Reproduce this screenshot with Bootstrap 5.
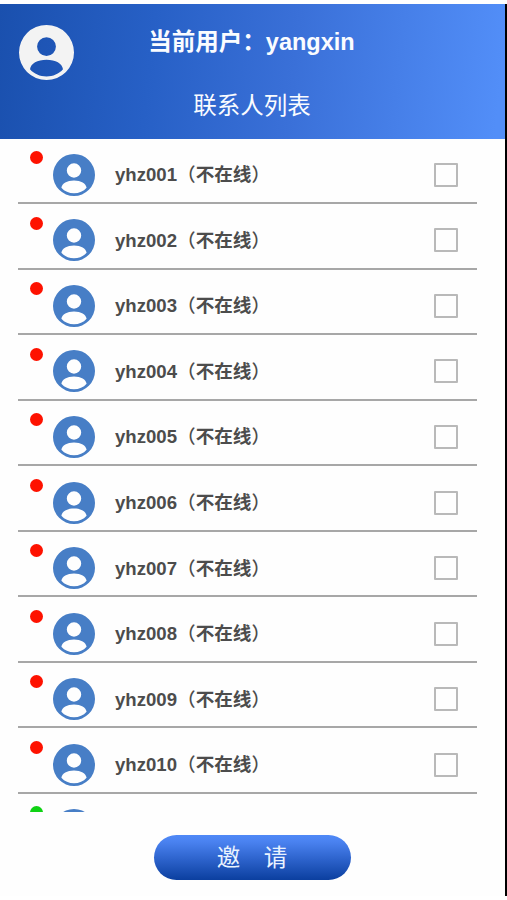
<!DOCTYPE html>
<html lang="zh-CN">
<head>
<meta charset="utf-8">
<meta name="viewport" content="width=device-width, initial-scale=1">
<title>联系人列表</title>
<link href="https://cdn.jsdelivr.net/npm/bootstrap@5.3.0/dist/css/bootstrap.min.css" rel="stylesheet">
<style>
body { font-family: "Liberation Sans", "Noto Sans CJK SC", sans-serif; background: #fff; height: 900px; padding: 4px 0; overflow: hidden; }
.screen { height: 892px; background: #fefefe; border-right: 2px solid #000; }
.top-bar { height: 134.5px; background: linear-gradient(96deg, #1a50ae 0%, #2760c6 30%, #3a70d8 58%, #528ef8 98%); color: #fafcff; padding: 20px 0 0; }
.top-bar h1 { font-size: 23.5px; line-height: 36px; padding-right: 2px; }
.top-bar h2 { font-size: 23.5px; line-height: 36px; margin-top: 28px; font-weight: 400; padding-right: 1px; }
.me { left: 18.5px; top: 20.5px; width: 55px; height: 55px; color: #f3f3f3; }
.contacts { height: 673.5px; padding: 0 28px 0 17.5px; }
.contact { height: 65.55px; padding: 9px 19px 0 12.5px; border-bottom: 2px solid #a7a7a7; flex-shrink: 0; }
.dot { width: 13px; height: 13px; background: #fe1200; margin-top: 3.5px; }
.dot.online { background: #0fd214; }
.avatar { width: 42px; height: 42px; margin-left: 10px; color: #477ec6; }
.who { font-size: 18.6px; line-height: 28px; margin-left: 20px; padding-top: 1px; color: #4c4c4c; }
.paren { font-weight: 500; }
.form-check-input.pick { width: 24px; height: 24px; margin: 0; border: 2px solid #b9b9b9; border-radius: 1px; background-color: #fefefe; }
.invite, .invite:hover { width: 197px; height: 45px; margin-top: 23px; padding: 2px 1px 0 0; font-size: 23.5px; line-height: 43px; color: #e9f3ff; border: 0; background: linear-gradient(#4f89f7 0%, #4a82f0 15%, #2c62cb 55%, #0b3f9f 100%); }
</style>
<script src="https://cdn.jsdelivr.net/npm/bootstrap@5.3.0/dist/js/bootstrap.bundle.min.js"></script>
</head>
<body>
<svg class="d-none" xmlns="http://www.w3.org/2000/svg">
  <symbol id="person" viewBox="0 0 42 42">
    <path fill="currentColor" fill-rule="evenodd" d="M21 0a21 21 0 1 1 0 42a21 21 0 1 1 0-42zM21 9.300a7.200 7.200 0 1 0 0 14.400a7.200 7.200 0 1 0 0-14.400zM8.400 33.800C9 29.500 14 26.600 21 26.600s12 2.900 12.600 7.200C30.500 37.400 26 39.300 21 39.300s-9.500-1.900-12.600-5.500z"/>
  </symbol>
</svg>
<div class="screen d-flex flex-column">
  <header class="top-bar position-relative text-center">
    <svg class="me position-absolute"><use href="#person"/></svg>
    <h1 class="fw-bold mb-0">当前用户：yangxin</h1>
    <h2 class="mb-0">联系人列表</h2>
  </header>
  <main class="contacts d-flex flex-column overflow-hidden" id="contacts"></main>
  <button type="button" class="btn invite rounded-pill align-self-center">邀&#12288;请</button>
</div>
<script>
const list = document.getElementById('contacts');
for (let i = 1; i <= 11; i++) {
  const name = 'yhz' + String(i).padStart(3, '0');
  const online = i === 11;
  list.insertAdjacentHTML('beforeend', `
    <div class="contact d-flex align-items-center">
      <span class="dot rounded-circle align-self-start ${online ? 'online' : ''}"></span>
      <svg class="avatar flex-shrink-0"><use href="#person"/></svg>
      <label class="who fw-bold flex-grow-1" for="c${i}">${online ? '' : name + '<span class="paren">（</span>不在线<span class="paren">）</span>'}</label>
      <input class="form-check-input pick" type="checkbox" id="c${i}">
    </div>`);
}
</script>
</body>
</html>
